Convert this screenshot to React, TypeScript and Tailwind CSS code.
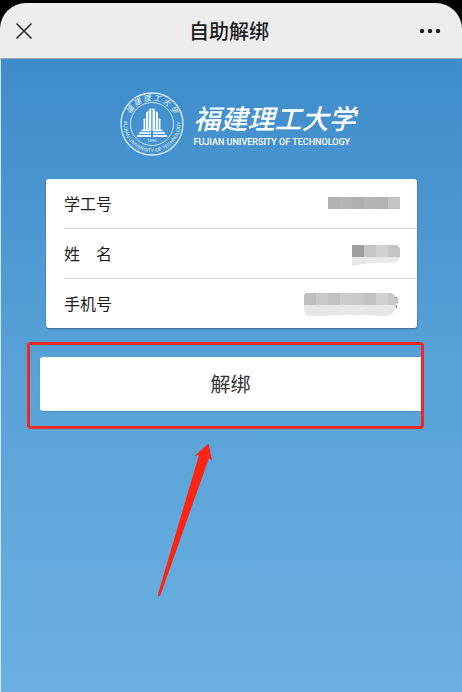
import type { ReactNode } from "react";

function Seal() {
  return (
    <svg viewBox="0 0 64 64" className="size-16 shrink-0" fill="none" stroke="#d6ecfa" role="img" aria-label="校徽">
      <defs>
        <path id="ring-top" d="M8.5 32a23.5 23.5 0 0 1 47 0" />
        <path id="ring-bottom" d="M4.5 24a28.5 28.5 0 1 0 55 0" />
      </defs>
      <circle cx="32" cy="32" r="31" strokeWidth="1.3" />
      <circle cx="32" cy="32" r="21.5" strokeWidth="0.9" />
      <g fill="#e6f4fd" stroke="none">
        <text fontSize="7.5" className="font-['Noto_Sans_CJK_SC',sans-serif] italic">
          <textPath href="#ring-top" startOffset="50%" textAnchor="middle">
            福 建 理 工 大 学
          </textPath>
        </text>
        <text fontSize="5" className="font-['Liberation_Sans',sans-serif]">
          <textPath href="#ring-bottom" startOffset="50%" textAnchor="middle">
            FUJIAN UNIVERSITY OF TECHNOLOGY
          </textPath>
        </text>
        <text x="32" y="50" fontSize="4" textAnchor="middle" className="font-['Liberation_Sans',sans-serif]">
          1896
        </text>
      </g>
      {/* Towers and steps */}
      <g fill="#f2faff" stroke="none">
        <path d="M26 20.500l2.200-1.500v20H26z" />
        <path d="M28.800 17.500l2.500-1.500v23h-2.500z" />
        <path d="M32.500 16l2.500 1.500v21.500h-2.500z" />
        <path d="M35.800 19l2.200 1.500v18.500h-2.200z" />
        <path d="M23.500 27l1.800-1v13h-1.800zM38.700 26l1.800 1v12h-1.800z" />
        <path d="M22 37.500h9v1.800H21zM33 37.500h9l1 1.800H33z" />
        <path d="M19.500 40.300H31v1.800H18.500zM33 40.300h11.500l1 1.800H33z" />
        <path d="M17.500 43.100H31v1.800H16.500zM33 43.100h13.500l1 1.800H33z" />
      </g>
    </svg>
  );
}

function MaskedId() {
  return (
    <svg viewBox="0 0 72 24" className="h-6 w-[72px]" role="img" aria-label="已隐藏">
      <path fill="#b2b2b2" d="M0 6h12v12H0z" />
      <path fill="#b5b5b5" d="M12 6h12v12H12zM36 6h12v12H36z" />
      <path fill="#b0b0b0" d="M24 6h12v12H24z" />
      <path fill="#b3b3b3" d="M48 6h12v12H48z" />
      <path fill="#c3c3c3" d="M60 6h12v12H60z" />
    </svg>
  );
}

function MaskedName() {
  return (
    <svg viewBox="0 0 48 26" className="h-[26px] w-12" role="img" aria-label="已隐藏">
      <path fill="#e8e8e8" d="M0 17h48q-1 6-9 6-20-1-39 3z" />
      <path fill="#9e9e9e" d="M0 5h12v12H0z" />
      <path fill="#c6c6c6" d="M12 5h12v12H12z" />
      <path fill="#d0d0d0" d="M24 5h12v12H24z" />
      <path fill="#c4c4c4" d="M36 5h9l3 3v9H36z" />
    </svg>
  );
}

function MaskedPhone() {
  return (
    <svg viewBox="0 -3 98 26" className="h-[26px] w-[98px]" role="img" aria-label="已隐藏">
      <path fill="#e6e6e6" d="M2 11h92q-1 11-9 12-9 0-24-1-25-1-38 1H8q-6-1-6-7z" />
      <path fill="#bfbfbf" d="M4 0h10v12H2V2z" />
      <path fill="#c8c8c8" d="M14 0h12v12H14zM50 0h12v12H50z" />
      <path fill="#c2c2c2" d="M26 0h12v12H26zM62 0h12v12H62z" />
      <path fill="#cccccc" d="M38 0h12v12H38z" />
      <path fill="#d0d0d0" d="M74 0h12v12H74z" />
      <path fill="#c8c8c8" d="M86 0h4q3 2 4 6v6h-8z" />
      <path stroke="#777" fill="none" d="M93 4.500h1.500l.5 1v5M94.500 12v3" />
    </svg>
  );
}

function Row({ label, children }: { label: ReactNode; children: ReactNode }) {
  return (
    <div className="box-content flex h-[47px] items-center justify-between pr-[17px] pb-[2px]">
      <dt className="text-base text-[#1c1c1c]">{label}</dt>
      <dd>{children}</dd>
    </div>
  );
}

export default function App() {
  return (
    <div className="flex min-h-screen flex-col bg-black pt-[3px] font-['Noto_Sans_CJK_SC',sans-serif]">
      <header className="flex h-14 items-center justify-between rounded-t-[26px] border-b border-[#9aa9b5] bg-[#ededed] pr-5 pl-4">
        <button type="button" aria-label="关闭" className="flex w-6 text-[#222]">
          <svg viewBox="0 0 16 16" className="size-4" fill="none" stroke="currentColor" strokeWidth="1.500">
            <path d="M0.500 0.500l15 15M15.500 0.500l-15 15" />
          </svg>
        </button>
        <h1 className="text-xl font-medium text-[#1a1a1a]">自助解绑</h1>
        <button type="button" aria-label="更多" className="flex w-6 justify-center text-[#1a1a1a]">
          <svg viewBox="0 0 22 6" className="h-[6px] w-[22px]" fill="currentColor">
            <circle cx="3" cy="3" r="2.200" />
            <circle cx="11" cy="3" r="2.200" />
            <circle cx="19" cy="3" r="2.200" />
          </svg>
        </button>
      </header>

      <main className="flex-1 border-l border-[#d5e6f2] bg-linear-to-b from-[#3e8ccb] via-[#58a2d7] to-[#6bafe1]">
        <div className="flex items-center justify-center gap-[10px] pt-[33px] pl-3">
          <Seal />
          <div className="pt-1 text-white">
            <p className="text-[27px] leading-8 font-medium italic">福建理工大学</p>
            <p className="font-[Roboto,sans-serif] text-[9px] leading-4 font-medium whitespace-nowrap">
              FUJIAN UNIVERSITY OF TECHNOLOGY
            </p>
          </div>
        </div>

        <dl className="mx-[45px] mt-[23px] divide-y divide-[#d9d9d9] rounded-[3px] bg-white pl-[18px] shadow-[0_1px_2px_rgba(0,0,0,0.35)]">
          <Row label="学工号">
            <MaskedId />
          </Row>
          <Row label="姓　名">
            <MaskedName />
          </Row>
          <Row label="手机号">
            <MaskedPhone />
          </Row>
        </dl>

        {/* Highlighted step */}
        <div className="mt-[14px] mr-[38px] ml-[26px] rounded-[4px] border-3 border-[#ea2a24] pt-3 pb-[15px] pl-[10px]">
          <button
            type="button"
            className="block h-[54px] w-full rounded-l-[3px] bg-white text-xl text-[#333] shadow-[0_1px_1px_rgba(0,0,0,0.15)]"
          >
            解绑
          </button>
        </div>
        <svg viewBox="0 0 56 156" className="mt-[13px] ml-[156px] h-[156px] w-14" fill="#fe2312" aria-hidden="true">
          <path d="M51.500 1.500L37.500 14l4.500-1L1 152v2h1.500l1-1L52 16l3 3z" />
        </svg>
      </main>
    </div>
  );
}
